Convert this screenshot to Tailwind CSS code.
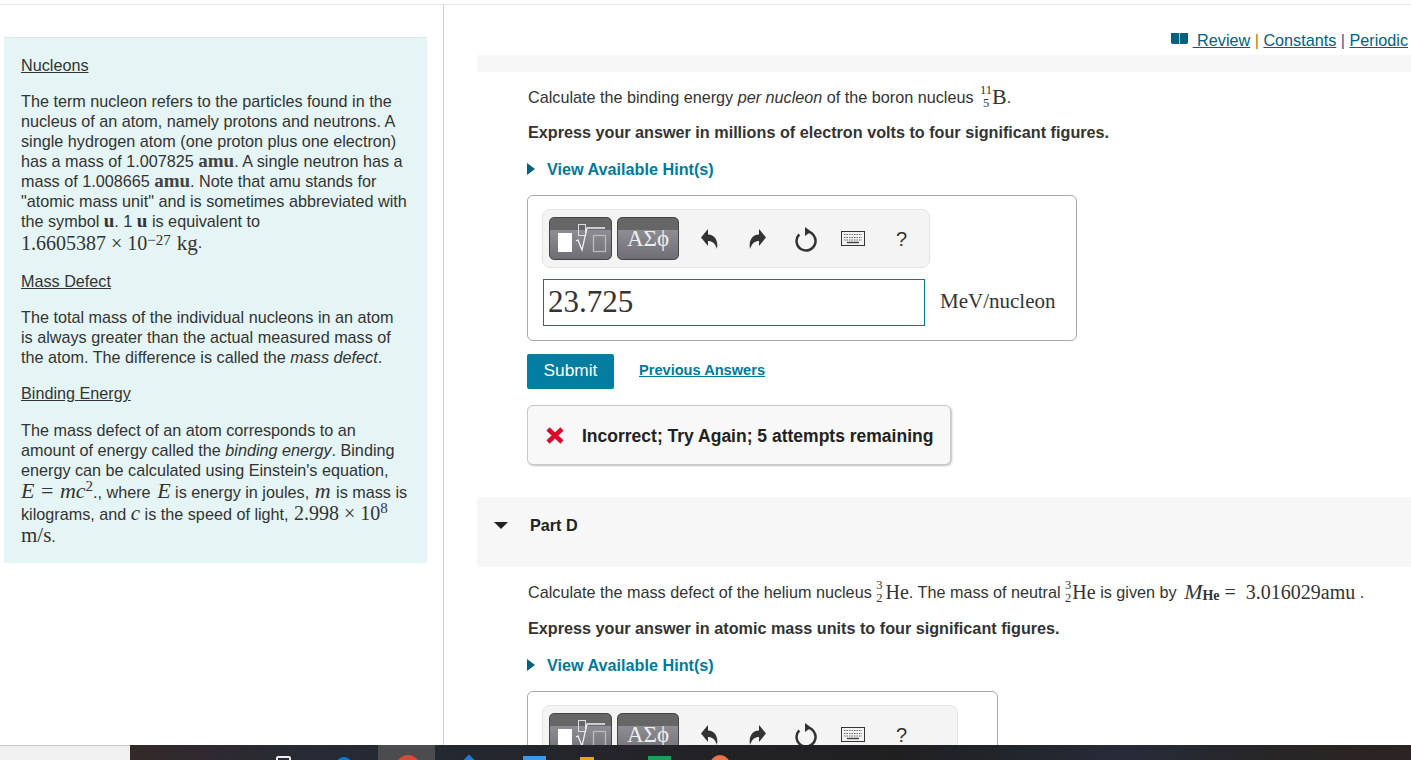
<!DOCTYPE html>
<html lang="en">
<head>
  <meta charset="UTF-8">
  <title>Binding energy</title>
  <script src="https://cdn.jsdelivr.net/npm/@tailwindcss/browser@4"></script>
</head>
<body class="h-[760px] w-[1411px] overflow-hidden bg-white font-['Liberation_Sans',Arial,sans-serif] text-[16.2px] leading-[20px] text-[#333]">
  <div class="h-[745px] overflow-hidden">
    <div class="mt-1 flex h-[741px] border-t border-[#e3e3e3]">

      <!-- left column -->
      <aside class="w-[444px] shrink-0 border-r border-[#d0d0d0] pl-1 pt-[32px]">
        <div class="h-[526px] w-[423px] border-t border-[#d8e8ea] bg-[#e5f5f6] pl-[17px] pt-[17px] whitespace-nowrap">
          <p class="underline">Nucleons</p>
          <p class="mt-4">The term nucleon refers to the particles found in the<br>nucleus of an atom, namely protons and neutrons. A<br>single hydrogen atom (one proton plus one electron)<br>has a mass of 1.007825 <span class="font-['Liberation_Serif',serif] text-[19px] font-bold text-[#444]">amu</span>. A single neutron has a<br>mass of 1.008665 <span class="font-['Liberation_Serif',serif] text-[19px] font-bold text-[#444]">amu</span>. Note that amu stands for<br>"atomic mass unit" and is sometimes abbreviated with<br>the symbol <span class="font-['Liberation_Serif',serif] text-[19px] font-bold">u</span>. 1 <span class="font-['Liberation_Serif',serif] text-[19px] font-bold">u</span> is equivalent to</p>
          <p class="flex h-[24px] items-end font-['Liberation_Serif',serif] text-[20px] leading-[24px]"><span>1.6605387 × 10</span><span class="mb-[8px] text-[15px] leading-[14px]">−27</span><span class="ml-[6px] text-[21px]">kg</span><span class="font-['Liberation_Sans',sans-serif] text-[16px]">.</span></p>
          <p class="mt-4 underline">Mass Defect</p>
          <p class="mt-4">The total mass of the individual nucleons in an atom<br>is always greater than the actual measured mass of<br>the atom. The difference is called the <em>mass defect</em>.</p>
          <p class="mt-4 underline">Binding Energy</p>
          <p class="mt-[17px]">The mass defect of an atom corresponds to an<br>amount of energy called the <em>binding energy</em>. Binding<br>energy can be calculated using Einstein's equation,</p>
          <p class="h-[22px] leading-[22px]"><span class="font-['Liberation_Serif',serif] text-[22px] italic">E</span><span class="mx-px font-['Liberation_Serif',serif] text-[22px]"> = </span><span class="font-['Liberation_Serif',serif] text-[22px] italic">mc</span><sup class="font-['Liberation_Serif',serif] text-[15px]">2</sup>., where <span class="ml-[2px] font-['Liberation_Serif',serif] text-[22px] italic">E</span> is energy in joules, <span class="mx-px font-['Liberation_Serif',serif] text-[22px] italic">m</span> is mass is</p>
          <p class="h-[22px] leading-[22px]">kilograms, and <span class="font-['Liberation_Serif',serif] text-[21px] italic">c</span> is the speed of light, <span class="ml-px font-['Liberation_Serif',serif] text-[20px]">2.998 × 10</span><sup class="font-['Liberation_Serif',serif] text-[15px]">8</sup></p>
          <p class="h-[22px] font-['Liberation_Serif',serif] text-[21px] leading-[22px]">m/s<span class="font-['Liberation_Sans',sans-serif] text-[16px]">.</span></p>
        </div>
      </aside>

      <!-- right column -->
      <main class="min-w-0 flex-1 overflow-hidden pl-[33px]">
        <div class="flex h-[50px] items-start justify-end pr-[3px] pt-[25px] text-[#00627e]">
          <svg class="mr-[5px] mt-[2px]" width="17" height="13" viewBox="0 0 17 13" fill="#00627e"><path d="M0 1h7.500c.5 0 .7.3.7.8V12H1.500L0 11z"/><path d="M17 1H9.500c-.5 0-.7.3-.7.8V12h6.700L17 11z"/></svg>
          <a class="underline whitespace-pre"> Review</a><span class="mx-[4.5px] text-[#b5771f]">|</span><a class="underline">Constants</a><span class="mx-[4.5px] text-[#5d4a7a]">|</span><a class="underline">Periodic</a>
        </div>
        <div class="h-[17px] bg-[#f7f7f7]"></div>

        <section class="pl-[50px]">
          <p class="ml-px mt-[15px] flex h-[20px] items-center whitespace-pre">Calculate the binding energy <em>per nucleon</em> of the boron nucleus <span class="ml-[2px] inline-flex flex-col items-center font-['Liberation_Serif',serif] text-[12.5px] leading-[13px]"><span>11</span><span>5</span></span><span class="font-['Liberation_Serif',serif] text-[22px]">B</span>.</p>
          <p class="ml-px mt-[15px] font-bold">Express your answer in millions of electron volts to four significant figures.</p>
          <p class="mt-[17px] flex items-center font-bold text-[#007a9c]"><span class="mr-[12px] h-0 w-0 border-y-[6px] border-l-[8px] border-y-transparent border-l-[#00627e]"></span>View Available Hint(s)</p>

          <div class="mt-4 h-[146px] w-[550px] rounded-[6px] border border-[#aaa] pl-[14px] pt-[13px]">
            <div class="flex h-[59px] w-[388px] items-center rounded-[8px] border border-[#e4e4e4] bg-[#f4f4f4] pl-[6px]">
              <div class="relative h-[43px] w-[63px] rounded-[5px] border border-[#444] bg-[linear-gradient(#666_0,#666_12px,#8d8d93_12px,#6e6e74_100%)]">
                <svg class="absolute -left-px -top-px" width="63" height="43" viewBox="0 0 63 43" fill="none"><rect x="9" y="16" width="14" height="19" fill="#fff"/><rect x="29.500" y="7.500" width="7" height="11" stroke="#ddd"/><path d="M27 24l2-1 4 10 5-22h18" stroke="#eee" stroke-width="1.300"/><rect x="44.500" y="18.500" width="12" height="16" stroke="#bbb" stroke-width="1.300"/></svg>
              </div>
              <div class="ml-[5px] flex h-[43px] w-[62px] items-center justify-center rounded-[5px] border border-[#444] bg-[linear-gradient(#666_0,#666_12px,#8d8d93_12px,#6e6e74_100%)] font-['Liberation_Serif',serif] text-[23px] text-[#eee]">ΑΣϕ</div>
              <svg class="ml-[21px]" width="20" height="24" viewBox="0 0 20 24" fill="#333"><path d="M8 2L1 10.500 8 19V14C12 14 15 16 17 22 18.500 14 15 7.500 8 7.500z"/></svg>
              <svg class="ml-[27px]" width="20" height="24" viewBox="0 0 20 24" fill="#333"><path d="M12 2L19 10.500 12 19V14C8 14 5 16 3 22 1.500 14 5 7.500 12 7.500z"/></svg>
              <svg class="ml-[28px]" width="22" height="26" viewBox="0 0 22 26" fill="none" stroke="#333" stroke-width="2.500"><path d="M4.300 8.300A9.500 9.500 0 1 0 11 5.500"/><path d="M10 1V10L16 5.500z" fill="#333" stroke="none"/></svg>
              <svg class="ml-[24px]" width="24" height="15" viewBox="0 0 24 15" fill="none"><rect x=".5" y=".5" width="23" height="14" stroke="#333" fill="#f4f4f4"/><path d="M3 3.500h18M3 6.500h18M3 9h18" stroke="#666" stroke-dasharray="1.500 1"/><path d="M6 11.500h12" stroke="#444" stroke-width="1.500"/></svg>
              <span class="ml-[31px] text-[20px] text-[#333]">?</span>
            </div>
            <div class="mt-[11px] flex items-center">
              <div class="ml-px h-[47px] w-[382px] border border-[#007a9c] pl-1 font-['Liberation_Serif',serif] text-[31px] leading-[43px]">23.725</div>
              <span class="-mt-[3px] ml-[15px] font-['Liberation_Serif',serif] text-[21px]">MeV/nucleon</span>
            </div>
          </div>

          <div class="mt-[13px] flex h-[35px] items-start">
            <button class="h-[35px] w-[87px] rounded-[2px] bg-[#037da0] pb-[3px] text-center text-[17.3px] text-white">Submit</button>
            <a class="ml-[25px] mt-[6px] text-[14.6px] font-bold text-[#007a9c] underline">Previous Answers</a>
          </div>

          <div class="mt-4 flex h-[60px] w-[424px] items-center rounded-[6px] border border-[#c8c8c8] bg-[#f8f8f8] pl-[18px] pt-px font-bold text-[#222] shadow-[1px_1px_2px_rgba(0,0,0,.25)] text-[17.5px]">
            <svg class="mr-[18px]" width="18" height="17" viewBox="0 0 18 17" fill="none" stroke="#dd0a28" stroke-width="4.500"><path d="M2 2l14 13M16 2L2 15"/></svg>
            Incorrect; Try Again; 5 attempts remaining
          </div>
        </section>

        <div class="mt-8 flex h-[70px] items-center bg-[#f7f7f7] pb-[14px] pl-[17px] font-bold text-[#222]">
          <span class="mr-[21px] h-0 w-0 border-x-[7.5px] border-t-[7px] border-x-transparent border-t-[#222]"></span><span class="ml-px">Part D</span>
        </div>

        <section class="pl-[50px]">
          <p class="ml-px mt-[15px] flex h-[20px] items-center whitespace-pre">Calculate the mass defect of the helium nucleus <span class="inline-flex flex-col items-center font-['Liberation_Serif',serif] text-[12.5px] leading-[13px]"><span>3</span><span>2</span></span><span class="ml-[3px] font-['Liberation_Serif',serif] text-[20px]">He</span>. The mass of neutral <span class="inline-flex flex-col items-center font-['Liberation_Serif',serif] text-[12.5px] leading-[13px]"><span>3</span><span>2</span></span><span class="ml-px font-['Liberation_Serif',serif] text-[20px]">He</span> is given by <span class="ml-[3px] font-['Liberation_Serif',serif] text-[22px] italic">M</span><span class="mt-2 font-['Liberation_Serif',serif] text-[14px] font-bold">He</span><span class="font-['Liberation_Serif',serif] text-[20px]"> =  3.016029amu</span> .</p>
          <p class="ml-px mt-[16px] font-bold">Express your answer in atomic mass units to four significant figures.</p>
          <p class="mt-[17px] flex items-center font-bold text-[#007a9c]"><span class="mr-[12px] h-0 w-0 border-y-[6px] border-l-[8px] border-y-transparent border-l-[#00627e]"></span>View Available Hint(s)</p>

          <div class="mt-4 h-[146px] w-[471px] rounded-[6px] border border-[#aaa] pl-[14px] pt-[13px]">
            <div class="flex h-[59px] w-[416px] items-center rounded-[8px] border border-[#e4e4e4] bg-[#f4f4f4] pl-[6px]">
              <div class="relative h-[43px] w-[63px] rounded-[5px] border border-[#444] bg-[linear-gradient(#666_0,#666_12px,#8d8d93_12px,#6e6e74_100%)]">
                <svg class="absolute -left-px -top-px" width="63" height="43" viewBox="0 0 63 43" fill="none"><rect x="9" y="16" width="14" height="19" fill="#fff"/><rect x="29.500" y="7.500" width="7" height="11" stroke="#ddd"/><path d="M27 24l2-1 4 10 5-22h18" stroke="#eee" stroke-width="1.300"/><rect x="44.500" y="18.500" width="12" height="16" stroke="#bbb" stroke-width="1.300"/></svg>
              </div>
              <div class="ml-[5px] flex h-[43px] w-[62px] items-center justify-center rounded-[5px] border border-[#444] bg-[linear-gradient(#666_0,#666_12px,#8d8d93_12px,#6e6e74_100%)] font-['Liberation_Serif',serif] text-[23px] text-[#eee]">ΑΣϕ</div>
              <svg class="ml-[21px]" width="20" height="24" viewBox="0 0 20 24" fill="#333"><path d="M8 2L1 10.500 8 19V14C12 14 15 16 17 22 18.500 14 15 7.500 8 7.500z"/></svg>
              <svg class="ml-[27px]" width="20" height="24" viewBox="0 0 20 24" fill="#333"><path d="M12 2L19 10.500 12 19V14C8 14 5 16 3 22 1.500 14 5 7.500 12 7.500z"/></svg>
              <svg class="ml-[28px]" width="22" height="26" viewBox="0 0 22 26" fill="none" stroke="#333" stroke-width="2.500"><path d="M4.300 8.300A9.500 9.500 0 1 0 11 5.500"/><path d="M10 1V10L16 5.500z" fill="#333" stroke="none"/></svg>
              <svg class="ml-[24px]" width="24" height="15" viewBox="0 0 24 15" fill="none"><rect x=".5" y=".5" width="23" height="14" stroke="#333" fill="#f4f4f4"/><path d="M3 3.500h18M3 6.500h18M3 9h18" stroke="#666" stroke-dasharray="1.500 1"/><path d="M6 11.500h12" stroke="#444" stroke-width="1.500"/></svg>
              <span class="ml-[31px] text-[20px] text-[#333]">?</span>
            </div>
          </div>
        </section>
      </main>
    </div>
  </div>

  <!-- taskbar -->
  <footer class="relative flex h-[15px] overflow-hidden">
    <div class="w-[130px] border-t border-[#c8c8c8] bg-[#f0f0f0]"></div>
    <div class="relative flex-1 bg-[linear-gradient(90deg,#33292a_0,#262a35_15%,#242428_40%,#1f1f20_60%,#262b38_78%,#272525_90%,#2a2424_100%)]">
      <div class="absolute left-[248px] top-0 h-[15px] w-[57px] bg-[#4c4c4e]"></div>
      <div class="absolute left-[146px] top-[11px] h-[8px] w-[15px] rounded-[2px] border-2 border-[#eee]"></div>
      <div class="absolute left-[206px] top-[12px] h-4 w-4 rounded-full bg-[#0a78d0]"></div>
      <div class="absolute left-[266px] top-[10px] h-6 w-6 rounded-full bg-[#d94a3e]"></div>
      <div class="absolute left-[333px] top-[12px] h-3 w-3 rotate-45 bg-[#1e7fd0]"></div>
      <div class="absolute left-[393px] top-[11px] h-4 w-[23px] bg-[#3d9ae8]"></div>
      <div class="absolute left-[450px] top-[12px] h-4 w-[14px] bg-[#e0a91c]"></div>
      <div class="absolute left-[518px] top-[11px] h-4 w-[23px] bg-[#1f9d5c]"></div>
      <div class="absolute left-[580px] top-[10px] h-5 w-5 rounded-full bg-[#e8734a]"></div>
    </div>
  </footer>
</body>
</html>
